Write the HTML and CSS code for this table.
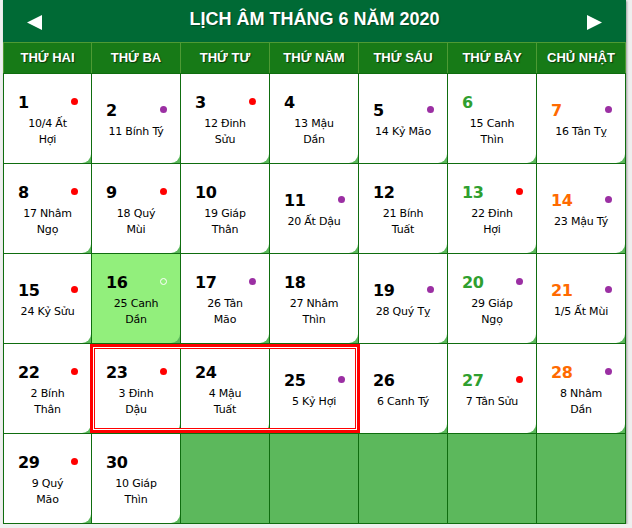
FILE: index.html
```html
<!DOCTYPE html>
<html lang="vi">
<head>
<meta charset="utf-8">
<title>Lịch âm tháng 6 năm 2020</title>
<link rel="stylesheet" href="styles.css">
</head>
<body>
<div class="cal">
  <div class="title">
    <svg class="arrow" viewBox="0 0 15 15"><polygon points="15,0 15,15 0,7.5" fill="#fff"/></svg>
    <h1>LỊCH ÂM THÁNG 6 NĂM 2020</h1>
    <svg class="arrow" viewBox="0 0 15 15"><polygon points="0,0 0,15 15,7.5" fill="#fff"/></svg>
  </div>
  <div class="weekdays">
    <div>THỨ HAI</div><div>THỨ BA</div><div>THỨ TƯ</div><div>THỨ NĂM</div><div>THỨ SÁU</div><div>THỨ BẢY</div><div>CHỦ NHẬT</div>
  </div>
  <div class="days">
    <div class="cell"><div class="day"><div class="top"><span class="num">1</span><span class="dot red"></span></div><div class="lunar">10/4 Ất<br>Hợi</div></div></div>
    <div class="cell"><div class="day"><div class="top"><span class="num">2</span><span class="dot purple"></span></div><div class="lunar">11 Bính Tý</div></div></div>
    <div class="cell"><div class="day"><div class="top"><span class="num">3</span><span class="dot red"></span></div><div class="lunar">12 Đinh<br>Sửu</div></div></div>
    <div class="cell"><div class="day"><div class="top"><span class="num">4</span></div><div class="lunar">13 Mậu<br>Dần</div></div></div>
    <div class="cell"><div class="day"><div class="top"><span class="num">5</span><span class="dot purple"></span></div><div class="lunar">14 Kỷ Mão</div></div></div>
    <div class="cell"><div class="day"><div class="top"><span class="num sat">6</span></div><div class="lunar">15 Canh<br>Thìn</div></div></div>
    <div class="cell"><div class="day"><div class="top"><span class="num sun">7</span><span class="dot purple"></span></div><div class="lunar">16 Tân Tỵ</div></div></div>

    <div class="cell"><div class="day"><div class="top"><span class="num">8</span><span class="dot red"></span></div><div class="lunar">17 Nhâm<br>Ngọ</div></div></div>
    <div class="cell"><div class="day"><div class="top"><span class="num">9</span><span class="dot red"></span></div><div class="lunar">18 Quý<br>Mùi</div></div></div>
    <div class="cell"><div class="day"><div class="top"><span class="num">10</span></div><div class="lunar">19 Giáp<br>Thân</div></div></div>
    <div class="cell"><div class="day"><div class="top"><span class="num">11</span><span class="dot purple"></span></div><div class="lunar">20 Ất Dậu</div></div></div>
    <div class="cell"><div class="day"><div class="top"><span class="num">12</span></div><div class="lunar">21 Bính<br>Tuất</div></div></div>
    <div class="cell"><div class="day"><div class="top"><span class="num sat">13</span><span class="dot red"></span></div><div class="lunar">22 Đinh<br>Hợi</div></div></div>
    <div class="cell"><div class="day"><div class="top"><span class="num sun">14</span><span class="dot purple"></span></div><div class="lunar">23 Mậu Tý</div></div></div>

    <div class="cell"><div class="day"><div class="top"><span class="num">15</span><span class="dot red"></span></div><div class="lunar">24 Kỷ Sửu</div></div></div>
    <div class="cell"><div class="day today"><div class="top"><span class="num">16</span><span class="dot ring"></span></div><div class="lunar">25 Canh<br>Dần</div></div></div>
    <div class="cell"><div class="day"><div class="top"><span class="num">17</span><span class="dot purple"></span></div><div class="lunar">26 Tân<br>Mão</div></div></div>
    <div class="cell"><div class="day"><div class="top"><span class="num">18</span></div><div class="lunar">27 Nhâm<br>Thìn</div></div></div>
    <div class="cell"><div class="day"><div class="top"><span class="num">19</span><span class="dot purple"></span></div><div class="lunar">28 Quý Tỵ</div></div></div>
    <div class="cell"><div class="day"><div class="top"><span class="num sat">20</span><span class="dot purple"></span></div><div class="lunar">29 Giáp<br>Ngọ</div></div></div>
    <div class="cell"><div class="day"><div class="top"><span class="num sun">21</span><span class="dot purple"></span></div><div class="lunar">1/5 Ất Mùi</div></div></div>

    <div class="cell"><div class="day"><div class="top"><span class="num">22</span><span class="dot red"></span></div><div class="lunar">2 Bính<br>Thân</div></div></div>
    <div class="cell"><div class="day"><div class="top"><span class="num">23</span><span class="dot red"></span></div><div class="lunar">3 Đinh<br>Dậu</div></div></div>
    <div class="cell"><div class="day"><div class="top"><span class="num">24</span></div><div class="lunar">4 Mậu<br>Tuất</div></div></div>
    <div class="cell"><div class="day"><div class="top"><span class="num">25</span><span class="dot purple"></span></div><div class="lunar">5 Kỷ Hợi</div></div></div>
    <div class="cell"><div class="day"><div class="top"><span class="num">26</span></div><div class="lunar">6 Canh Tý</div></div></div>
    <div class="cell"><div class="day"><div class="top"><span class="num sat">27</span><span class="dot red"></span></div><div class="lunar">7 Tân Sửu</div></div></div>
    <div class="cell"><div class="day"><div class="top"><span class="num sun">28</span><span class="dot purple"></span></div><div class="lunar">8 Nhâm<br>Dần</div></div></div>

    <div class="cell"><div class="day"><div class="top"><span class="num">29</span><span class="dot red"></span></div><div class="lunar">9 Quý<br>Mão</div></div></div>
    <div class="cell"><div class="day"><div class="top"><span class="num">30</span></div><div class="lunar">10 Giáp<br>Thìn</div></div></div>
    <div class="cell"></div>
    <div class="cell"></div>
    <div class="cell"></div>
    <div class="cell"></div>
    <div class="cell"></div>
  </div>
  <div class="highlight"></div>
</div>
</body>
</html>
```

FILE: styles.css
```css
html, body {
  margin: 0;
  padding: 0;
  background: #efefef;
}

body {
  font-family: "DejaVu Sans", sans-serif;
  color: #000;
}

.cal {
  position: relative;
  margin-left: 3px;
  width: 623px;
  box-shadow: 1px 1px 2px rgba(0, 0, 0, 0.35);
}

.title {
  height: 42px;
  box-sizing: border-box;
  padding: 0 24px;
  background: #006a35;
  display: flex;
  align-items: center;
  justify-content: space-between;
  color: #fff;
}

.title h1 {
  margin: 0 0 3px;
  font: bold 18px/21px "Liberation Sans", Arial, sans-serif;
  text-shadow: 1px 1px 1px rgba(0, 0, 0, 0.35);
}

.arrow {
  width: 15px;
  height: 15px;
  margin-top: 3px;
}

.weekdays {
  display: grid;
  grid-template-columns: 87px repeat(6, 88px);
  gap: 1px;
  padding: 1px 1px 0;
  background: #4e9a34;
}

.weekdays div {
  height: 30px;
  background: #177a17;
  color: #fff;
  font: bold 13px/30px "Liberation Sans", Arial, sans-serif;
  text-align: center;
  text-shadow: 1px 1px 1px rgba(0, 0, 0, 0.55);
}

.days {
  display: grid;
  grid-template-columns: 87px repeat(6, 88px);
  grid-auto-rows: 89px;
  gap: 1px;
  padding: 1px;
  background: #0f6d0f;
}

.cell {
  background: #5cb85c;
}

.day {
  height: 100%;
  background: #fff;
  border-bottom-right-radius: 9px;
  display: flex;
  flex-direction: column;
  justify-content: center;
}

.day.today {
  background: #92ef7c;
}

.top {
  height: 26px;
  padding: 0 13px 0 14px;
  display: flex;
  align-items: center;
  justify-content: space-between;
}

.num {
  font: bold 16px/26px "DejaVu Sans", sans-serif;
  letter-spacing: -0.5px;
}

.num.sat {
  color: #2f9f2f;
}

.num.sun {
  color: #ff6a00;
}

.dot {
  width: 7px;
  height: 7px;
  border-radius: 50%;
  margin-bottom: 2px;
  box-sizing: border-box;
}

.dot.red {
  background: #ff0000;
}

.dot.purple {
  background: #9b2fa3;
}

.dot.ring {
  border: 1px solid #fff;
}

.lunar {
  font: 11px/16px "DejaVu Sans", sans-serif;
  text-align: center;
  white-space: nowrap;
  letter-spacing: -0.2px;
}

.highlight {
  position: absolute;
  left: 87px;
  top: 344px;
  width: 270px;
  height: 89px;
  box-sizing: border-box;
  border: 3px solid #ff0000;
  box-shadow: inset 0 0 0 1px #fff, inset 0 0 0 2px #ff0000;
  pointer-events: none;
}
```
